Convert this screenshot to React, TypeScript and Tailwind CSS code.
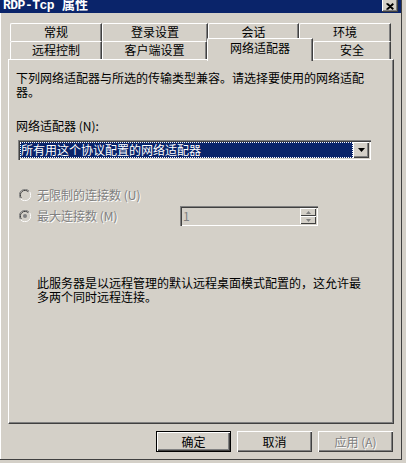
import React from "react";

const FONT = "font-['SimSun','Noto_Sans_CJK_SC',sans-serif]";

function Tab({ label, w, selected = false }: { label: string; w: number; selected?: boolean }) {
  if (selected) {
    return (
      <div
        className="relative z-10 -mb-[2px] -mt-[3px] flex h-[23px] items-start justify-center border-l border-t border-l-white border-t-white border-r border-r-[#404040] bg-[#d4d0c8] pt-[1px] text-[12px] leading-[16px] text-black shadow-[inset_-1px_0_0_#808080] rounded-tl-[2px]"
        style={{ width: w }}
      >
        {label}
      </div>
    );
  }
  return (
    <div
      className="flex h-[18px] items-start justify-center border-l border-t border-l-white border-t-white border-r border-r-[#404040] bg-[#d4d0c8] text-[12px] leading-[16px] text-black shadow-[inset_-1px_0_0_#808080] rounded-tl-[2px]"
      style={{ width: w }}
    >
      {label}
    </div>
  );
}

function Radio({ checked }: { checked?: boolean }) {
  return (
    <svg width="12" height="12" viewBox="0 0 12 12" className="shrink-0">
      <path d="M10.5 2.5 A5.5 5.5 0 0 0 1.5 9.5" fill="none" stroke="#808080" strokeWidth="1" />
      <path d="M9.5 3 A4.5 4.5 0 0 0 2.5 9" fill="none" stroke="#404040" strokeWidth="1" />
      <path d="M1.5 9.5 A5.5 5.5 0 0 0 10.5 2.5" fill="none" stroke="#ffffff" strokeWidth="1" />
      <path d="M2.5 9 A4.5 4.5 0 0 0 9.5 3" fill="none" stroke="#d4d0c8" strokeWidth="1" />
      <circle cx="6" cy="6" r="3.6" fill="#d4d0c8" />
      {checked && <circle cx="6" cy="6" r="2" fill="#808080" />}
    </svg>
  );
}

function Button({ label, isDefault, disabled }: { label: string; isDefault?: boolean; disabled?: boolean }) {
  return (
    <div
      className={
        "flex h-[21px] w-[75px] items-center justify-center text-[12px] leading-none " +
        (isDefault
          ? "border border-black shadow-[inset_1px_1px_0_#ffffff,inset_-1px_-1px_0_#404040,inset_-2px_-2px_0_#808080]"
          : "shadow-[inset_1px_1px_0_#ffffff,inset_-1px_-1px_0_#404040,inset_-2px_-2px_0_#808080]") +
        (disabled ? " text-[#808080] [text-shadow:1px_1px_0_#ffffff]" : " text-black")
      }
    >
      {label}
    </div>
  );
}

export default function App() {
  return (
    <div className={"h-[463px] w-[406px] overflow-hidden bg-[#d4d0c8] " + FONT}>
      <div className="flex h-[460px] w-[402px] flex-col border-b border-r border-b-[#404040] border-r-[#404040] bg-[#d4d0c8] shadow-[inset_1px_0_0_#ffffff]">
        {/* Title bar */}
        <div className="flex h-[13px] items-start justify-between bg-[#0a246a] pl-[3px] pr-[3px]">
          <div className="-mt-[4px] flex items-baseline text-[13px] font-bold leading-[16px] text-white">
            <span className="font-['Liberation_Mono',monospace] tracking-[-0.5px]">RDP-Tcp</span>
            <span className="ml-[8px]">属性</span>
          </div>
          <div className="flex h-[12px] w-[16px] items-center justify-center bg-[#d4d0c8] shadow-[inset_-1px_-1px_0_#404040,inset_1px_0_0_#ffffff,inset_-2px_-2px_0_#808080]">
            <svg width="8" height="7" viewBox="0 0 8 7">
              <path d="M0.5 0.5 L7 6.5 M1.5 0.5 L7.5 6 M7 0.5 L0.5 6.5 M7.5 1 L1.5 6.5" stroke="#000" strokeWidth="1.2" />
            </svg>
          </div>
        </div>

        {/* Tabs */}
        <div className="mt-[10px] flex flex-col">
          <div className="ml-[10px] flex">
            <Tab label="常规" w={92} />
            <Tab label="登录设置" w={106} />
            <Tab label="会话" w={91} />
            <Tab label="环境" w={92} />
          </div>
          <div className="ml-[10px] flex items-end">
            <Tab label="远程控制" w={92} />
            <Tab label="客户端设置" w={105} />
            <Tab label="网络适配器" w={106} selected />
            <Tab label="安全" w={78} />
          </div>
        </div>

        {/* Panel */}
        <div className="ml-[8px] flex h-[365px] w-[386px] flex-col border-l border-t border-l-white border-t-white border-b border-r border-b-[#404040] border-r-[#404040] shadow-[inset_-1px_-1px_0_#808080] px-[7px] pt-[11px] text-[12px] leading-[14px] text-black">
          <p className="w-[352px]">下列网络适配器与所选的传输类型兼容。请选择要使用的网络适配器。</p>

          <div className="mt-[20px]">网络适配器 (N):</div>

          {/* Combo */}
          <div className="ml-[2px] mt-[7px] flex h-[20px] w-[353px] items-stretch bg-white p-[2px] shadow-[inset_1px_1px_0_#808080,inset_2px_2px_0_#404040,inset_-1px_-1px_0_#ffffff,inset_-2px_-2px_0_#d4d0c8]">
            <div className="flex flex-1 items-center bg-[#0a246a] pl-[1px] text-white outline-1 outline-dotted outline-[#ffffff] -outline-offset-1">
              所有用这个协议配置的网络适配器
            </div>
            <div className="flex w-[16px] items-center justify-center bg-[#d4d0c8] shadow-[inset_1px_1px_0_#ffffff,inset_-1px_-1px_0_#404040,inset_-2px_-2px_0_#808080]">
              <svg width="7" height="4" viewBox="0 0 7 4">
                <path d="M0 0 H7 L3.5 4 Z" fill="#000" />
              </svg>
            </div>
          </div>

          {/* Radios */}
          <div className="ml-[3px] mt-[28px] flex items-center gap-[6px] text-[#808080] [text-shadow:1px_1px_0_#ffffff]">
            <Radio />
            <span>无限制的连接数 (U)</span>
          </div>
          <div className="ml-[3px] mt-[4px] flex items-center">
            <div className="flex w-[161px] items-center gap-[6px] text-[#808080] [text-shadow:1px_1px_0_#ffffff]">
              <Radio checked />
              <span>最大连接数 (M)</span>
            </div>
            <div className="flex h-[20px] w-[138px] items-stretch bg-[#d4d0c8] p-[2px] shadow-[inset_1px_1px_0_#808080,inset_2px_2px_0_#404040,inset_-1px_-1px_0_#ffffff,inset_-2px_-2px_0_#d4d0c8]">
              <div className="flex flex-1 items-center pl-[1px] text-[#808080]">1</div>
              <div className="flex w-[16px] flex-col">
                <div className="flex flex-1 items-center justify-center shadow-[inset_1px_1px_0_#ffffff,inset_-1px_-1px_0_#404040]">
                  <svg width="5" height="3" viewBox="0 0 5 3"><path d="M0 3 H5 L2.5 0 Z" fill="#808080" /></svg>
                </div>
                <div className="flex flex-1 items-center justify-center shadow-[inset_1px_1px_0_#ffffff,inset_-1px_-1px_0_#404040]">
                  <svg width="5" height="3" viewBox="0 0 5 3"><path d="M0 0 H5 L2.5 3 Z" fill="#808080" /></svg>
                </div>
              </div>
            </div>
          </div>

          <p className="ml-[21px] mt-[50px] w-[330px]">
            此服务器是以远程管理的默认远程桌面模式配置的，这允许最多两个同时远程连接。
          </p>
        </div>

        {/* Buttons */}
        <div className="mr-[8px] mt-[7px] flex justify-end gap-[6px]">
          <Button label="确定" isDefault />
          <Button label="取消" />
          <Button label="应用 (A)" disabled />
        </div>
      </div>
    </div>
  );
}
